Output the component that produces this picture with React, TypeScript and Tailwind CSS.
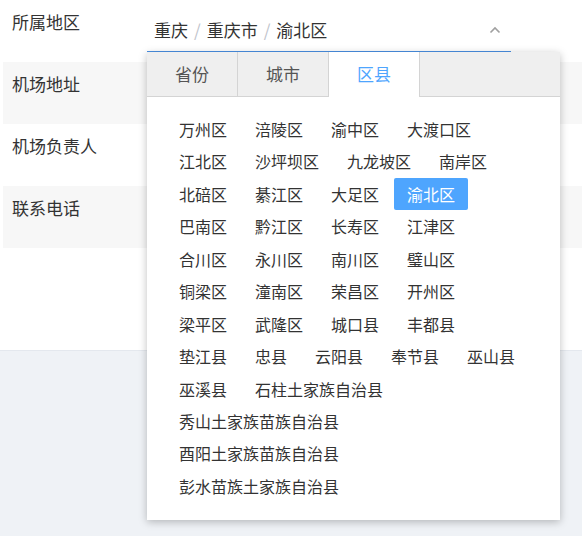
const fields = ["所属地区", "机场地址", "机场负责人", "联系电话"];

const tabs = ["省份", "城市", "区县"];

const districts = [
  "万州区", "涪陵区", "渝中区", "大渡口区", "江北区", "沙坪坝区", "九龙坡区", "南岸区",
  "北碚区", "綦江区", "大足区", "渝北区", "巴南区", "黔江区", "长寿区", "江津区",
  "合川区", "永川区", "南川区", "璧山区", "铜梁区", "潼南区", "荣昌区", "开州区",
  "梁平区", "武隆区", "城口县", "丰都县", "垫江县", "忠县", "云阳县", "奉节县", "巫山县",
  "巫溪县", "石柱土家族自治县", "秀山土家族苗族自治县", "酉阳土家族苗族自治县", "彭水苗族土家族自治县",
];

const path = ["重庆", "重庆市", "渝北区"];

const App = () => {
  return (
    <div className="relative h-[536px] w-[582px] overflow-hidden bg-white font-['Noto_Sans_CJK_SC',sans-serif] text-[#333]">
      <div className="pl-[3px]">
        {fields.map((f, i) => (
          <div
            key={f}
            className={`flex h-[62px] ${i % 2 === 1 ? "bg-[#f7f7f7]" : "bg-white"}`}
          >
            <div className="w-[144px] pl-[9px] pt-[10px] text-[17px] leading-[24px]">{f}</div>
            {i === 0 && (
              <div className="mt-[9px] flex h-[43px] w-[364px] items-center border-b border-[#4a90e2] pl-[7px] pr-[10px] text-[17px]">
                <div className="flex flex-1 items-center">
                  {path.map((p, j) => (
                    <span key={p} className="flex items-center">
                      {j > 0 && <span className="mx-[6px] text-[#c0c4cc]">/</span>}
                      {p}
                    </span>
                  ))}
                </div>
                <svg className="h-[8px] w-[12px]" viewBox="0 0 12 8" fill="none">
                  <path d="M1.5 6.5L6 2l4.5 4.5" stroke="#a0a0a0" strokeWidth="1.6" />
                </svg>
              </div>
            )}
          </div>
        ))}
      </div>
      <div className="h-[102px]" />
      <div className="h-[186px] border-t border-[#e4e8ee] bg-[#eff2f6]" />

      {/* cascader dropdown */}
      <div className="absolute left-[147px] top-[52px] w-[413px] bg-white shadow-[0_2px_8px_rgba(0,0,0,0.25)]">
        <div className="flex h-[45px] border-b border-[#d4d4d4] bg-[#efefef]">
          {tabs.map((t, i) => (
            <div
              key={t}
              className={`-mb-px flex w-[91px] items-center justify-center border-r border-[#d4d4d4] pb-[2px] text-[17px] ${
                i === 2 ? "bg-white text-[#4ea5fe]" : "text-[#555]"
              }`}
            >
              {t}
            </div>
          ))}
        </div>
        <div className="flex flex-wrap gap-y-[0.45px] pb-[18px] pl-[19px] pr-6 pt-[16px]">
          {districts.map((d) => (
            <span
              key={d}
              className={`mr-[2px] h-8 rounded-[2px] px-[13px] text-[16px] leading-8 ${
                d === "渝北区" ? "bg-[#4ea5fe] text-white" : "text-[#333]"
              }`}
            >
              {d}
            </span>
          ))}
        </div>
      </div>
    </div>
  );
};

export default App;
